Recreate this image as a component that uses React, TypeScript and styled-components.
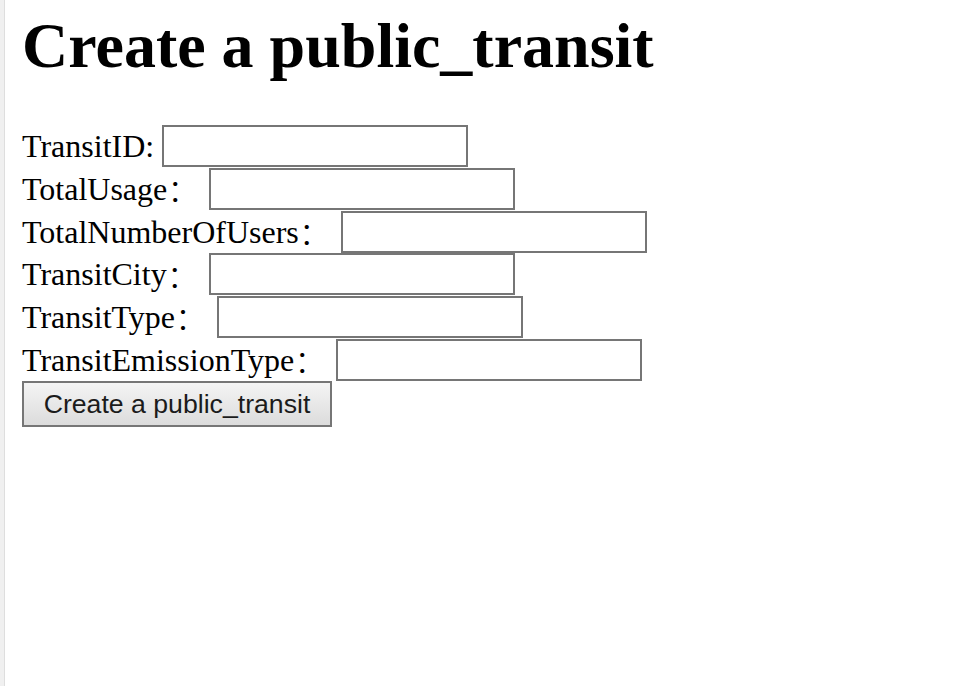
import React from 'react';
import styled, { createGlobalStyle } from 'styled-components';

const GlobalStyle = createGlobalStyle`
    html,
    body {
        margin: 0;
        padding: 0;
        background: #ffffff;
    }
    body {
        font-family: 'Liberation Serif', 'Times New Roman', 'Noto Sans CJK SC', serif;
        color: #000;
    }
`;

const Frame = styled.div`
    min-height: 100vh;
    box-sizing: border-box;
    border-left: 4px solid #f0f0f0;
`;

const Page = styled.div`
    min-height: 100vh;
    box-sizing: border-box;
    border-left: 1px solid #dedede;
    padding: 9px 0 0 17px;
`;

const Title = styled.h1`
    margin: 0 0 42px;
    font-size: 64px;
    font-weight: bold;
    line-height: normal;
`;

const Form = styled.form`
    display: flex;
    flex-direction: column;
    align-items: flex-start;
`;

const Row = styled.div`
    display: flex;
    align-items: center;
    height: 42.67px;
`;

const Label = styled.label`
    font-size: 32px;
    line-height: 36px;
    font-family: 'Liberation Serif', serif;
    white-space: pre;
`;

const WideColon = styled.span`
    display: inline-block;
    width: 34px;
    line-height: 0;
    font-family: 'Noto Sans CJK SC', sans-serif;
    font-weight: 300;
    vertical-align: -0.07em;
`;

const TextInput = styled.input`
    box-sizing: border-box;
    width: 306px;
    height: 42px;
    margin: 0;
    padding: 2px 4px;
    border: 2px solid #767676;
    background: #fff;
    font-family: 'Liberation Sans', Arial, sans-serif;
    font-size: 26.67px;
    outline: none;
`;

const SubmitButton = styled.button`
    box-sizing: border-box;
    width: 310px;
    height: 46px;
    margin: 0;
    padding: 0;
    border: 2px solid #767676;
    background: linear-gradient(#f4f4f4, #dcdcdc);
    color: #1b1b1b;
    font-family: 'Liberation Sans', Arial, sans-serif;
    font-size: 26.67px;
    line-height: 1;
`;

const fields = [
    { name: 'TransitID', wide: false },
    { name: 'TotalUsage', wide: true },
    { name: 'TotalNumberOfUsers', wide: true },
    { name: 'TransitCity', wide: true },
    { name: 'TransitType', wide: true },
    { name: 'TransitEmissionType', wide: true },
];

const App = () => {
    return (
        <>
            <GlobalStyle />
            <Frame>
                <Page>
                    <Title>Create a public_transit</Title>
                    <Form onSubmit={(e) => e.preventDefault()}>
                        {fields.map((f) => (
                            <Row key={f.name}>
                                <Label htmlFor={f.name}>
                                    {f.name}
                                    {f.wide ? <WideColon>：</WideColon> : ':'}{' '}
                                </Label>
                                <TextInput id={f.name} type="text" name={f.name} />
                            </Row>
                        ))}
                        <SubmitButton type="submit">Create a public_transit</SubmitButton>
                    </Form>
                </Page>
            </Frame>
        </>
    );
};

export default App;
